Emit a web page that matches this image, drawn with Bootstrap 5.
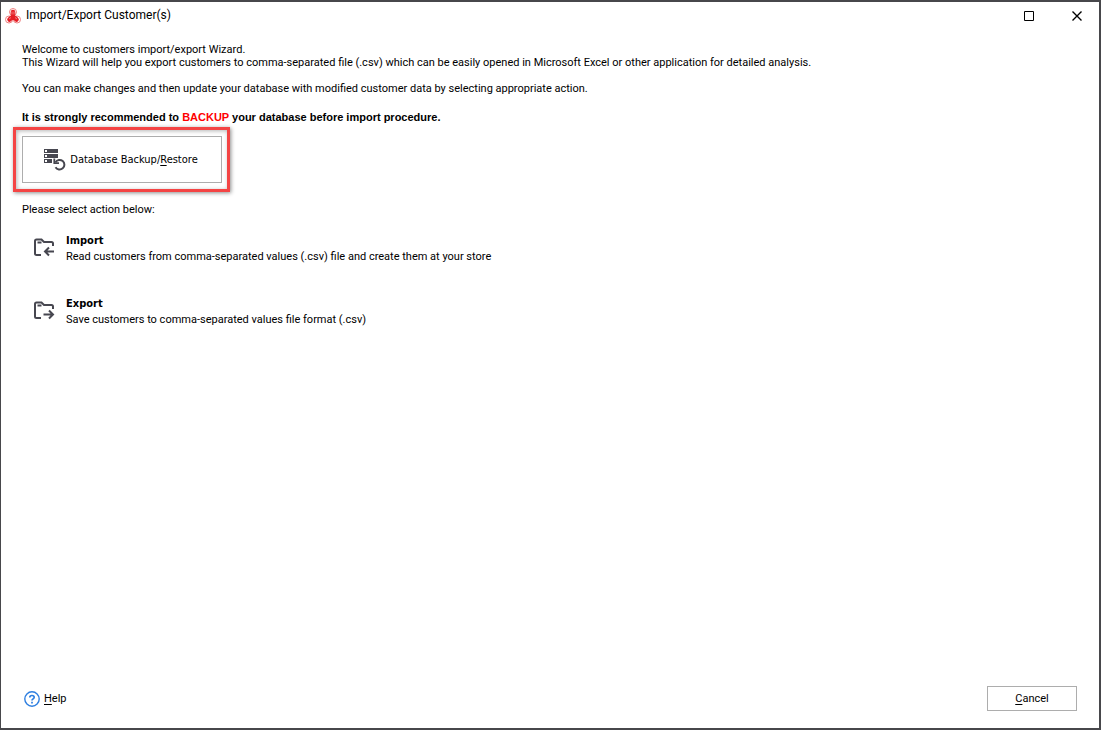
<!DOCTYPE html>
<html lang="en">
<head>
<meta charset="utf-8">
<meta name="viewport" content="width=device-width, initial-scale=1">
<title>Import/Export Customer(s)</title>
<link href="https://cdn.jsdelivr.net/npm/bootstrap@5.3.0/dist/css/bootstrap.min.css" rel="stylesheet">
<style>
  body { font-family: Roboto, sans-serif; font-size: 11px; line-height: 13px; color: #000; }
  .wizard { border: 2px solid #47474b; border-left-width: 1px; }
  .titlebar { height: 28px; padding-left: 4px; }
  .titlebar h1 { font-size: 12px; line-height: 16px; margin: 0 0 2px 5px; }
  .win-btn { width: 48px; height: 28px; color: #000; }
  .window-controls { margin-right: -2px; }
  .content { padding: 13px 21px 0; }
  .content p { margin-bottom: 13px; }
  .content p.advice { margin-bottom: 3px; font-family: "Liberation Sans", sans-serif; }
  .content p.choose { margin-top: 11px; }
  .backup-word { color: #f00; }
  .highlight { border: 3px solid #f44444; padding: 6px 5px 6px 6px; margin-left: -9px; box-shadow: 1px 1px 4px rgba(0,0,0,.45), inset 1px 1px 4px rgba(0,0,0,.3); }
  .flat-btn { border: 1px solid #adadad; background: #fff; font-size: 11px; line-height: 13px; color: #000; }
  .backup-btn { width: 200px; height: 47px; font-family: "DejaVu Sans Condensed", "Noto Sans", sans-serif; }
  .action { color: #000; padding: 0 12px; margin-bottom: 31px; line-height: 16px; gap: 11px; }
  .action svg { margin-top: 5px; }
  .action strong { display: block; font-family: "DejaVu Sans Condensed", "Noto Sans", sans-serif; }
  .foot { padding: 0 22px 17px 23px; }
  .cancel-btn { width: 90px; height: 25px; }
  .flat-btn u, .foot u { text-underline-offset: 2px; }
</style>
</head>
<body>
<div class="wizard d-flex flex-column min-vh-100 bg-white">
  <header class="titlebar d-flex align-items-center flex-shrink-0">
    <svg width="16" height="16" viewBox="0 0 16 16" aria-hidden="true">
      <g fill="#fff" stroke="#ee8080" stroke-width="1">
        <circle cx="8" cy="4" r="3.500"/><circle cx="4" cy="11.500" r="3.500"/><circle cx="12" cy="11.500" r="3.500"/>
      </g>
      <path d="M8 8.500V4M8 8.500L4.500 11.500M8 8.500l3.500 3" stroke="#e51c24" stroke-width="4.600" stroke-linecap="round"/>
      <path d="M7 3.500v3M9 3.500v3M4 11l2-1.500M12 11l-2-1.500M6.500 13h3" stroke="#f7a0a0" stroke-width=".7"/>
    </svg>
    <h1 class="fw-normal">Import/Export Customer(s)</h1>
    <div class="window-controls d-flex ms-auto">
      <button type="button" class="win-btn btn p-0 border-0 rounded-0 d-flex align-items-center justify-content-center" aria-label="Maximize">
        <svg width="10" height="10" viewBox="0 0 10 10"><path d="M.5.5h9v9h-9z" fill="none" stroke="#000"/></svg>
      </button>
      <button type="button" class="win-btn btn p-0 border-0 rounded-0 d-flex align-items-center justify-content-center" aria-label="Close">
        <svg width="10" height="10" viewBox="0 0 10 10"><path d="M.5.5l9 9M9.500.5l-9 9" fill="none" stroke="#000" stroke-width="1.4"/></svg>
      </button>
    </div>
  </header>

  <main class="content flex-grow-1">
    <p>Welcome to customers import/export Wizard.<br>This Wizard will help you export customers to comma-separated file (.csv) which can be easily opened in Microsoft Excel or other application for detailed analysis.</p>
    <p class="mb-3">You can make changes and then update your database with modified customer data by selecting appropriate action.</p>
    <p class="advice fw-bold">It is strongly recommended to <span class="backup-word">BACKUP</span> your database before import procedure.</p>
    <div class="highlight d-inline-block">
      <button type="button" class="flat-btn backup-btn btn rounded-0 py-0 ps-0 pe-1 d-flex align-items-center justify-content-center">
        <svg width="24" height="22" viewBox="0 0 24 22" aria-hidden="true">
          <path d="M2 0h14v4H2zM2 5h14v4H2zM2 10h8v4H2z" fill="#474750"/>
          <path d="M3 1h2v2H3zM3 6h2v2H3zM3 11h2v2H3z" fill="#fff"/>
          <path d="M11 9h6v3h-6z" fill="#fff"/>
          <path d="M13.500 13.200A4.800 4.800 0 1 1 13.500 18.200" fill="none" stroke="#474750" stroke-width="2"/>
          <path d="M12.300 9.500v4.700h4.700" fill="none" stroke="#474750" stroke-width="1.800"/>
        </svg>
        <span class="ms-1">Database Backup/<u>R</u>estore</span>
      </button>
    </div>
    <p class="choose">Please select action below:</p>

    <div class="pt-1">
      <a href="#import" class="action d-flex text-decoration-none">
        <svg width="21" height="19" viewBox="0 0 21 19" aria-hidden="true">
          <path d="M7 17H2.500Q1 17 1 15.500V3Q1 1.500 2.500 1.500H7.500L10 4H17.500Q19 4 19 5.500V8M3.500 4.500h4M20 13.500H11M15 9.500L11 13.500l4 4" fill="none" stroke="#474750" stroke-width="2"/>
        </svg>
        <span><strong>Import</strong>Read customers from comma-separated values (.csv) file and create them at your store</span>
      </a>
      <a href="#export" class="action d-flex text-decoration-none">
        <svg width="21" height="19" viewBox="0 0 21 19" aria-hidden="true">
          <path d="M7 17H2.500Q1 17 1 15.500V3Q1 1.500 2.500 1.500H7.500L10 4H17.500Q19 4 19 5.500V8M3.500 4.500h4M9.500 13.500H19M15 9.500l4 4-4 4" fill="none" stroke="#474750" stroke-width="2"/>
        </svg>
        <span><strong>Export</strong>Save customers to comma-separated values file format (.csv)</span>
      </a>
    </div>
  </main>

  <footer class="foot d-flex align-items-center justify-content-between">
    <a href="#help" class="d-flex align-items-center gap-1 text-black text-decoration-none">
      <svg width="16" height="16" viewBox="0 0 16 16" fill="none" stroke="#2e7fe0" aria-hidden="true">
        <circle cx="8" cy="8" r="7.200" stroke-width="1.400"/>
        <path d="M5.800 6.500Q5.800 4.500 8 4.500T10.200 6.300Q10.200 7.300 9 7.900 8 8.400 8 9.600M8 10.800v1.600" stroke-width="1.700"/>
      </svg>
      <span><u>H</u>elp</span>
    </a>
    <button type="button" class="flat-btn cancel-btn btn rounded-0 p-0"><u>C</u>ancel</button>
  </footer>
</div>
<script src="https://cdn.jsdelivr.net/npm/bootstrap@5.3.0/dist/js/bootstrap.bundle.min.js"></script>
</body>
</html>
